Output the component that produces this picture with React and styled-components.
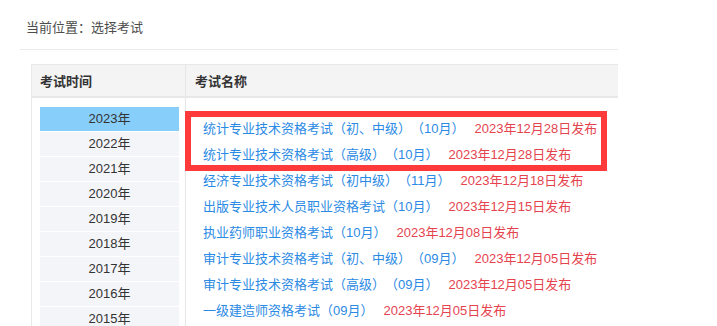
import React from 'react';
import styled, { createGlobalStyle } from 'styled-components';

const GlobalStyle = createGlobalStyle`
  html, body {
    margin: 0;
    padding: 0;
    background: #fff;
  }
  body {
    font-family: "Liberation Sans", "Noto Sans CJK SC", sans-serif;
    font-size: 13px;
    color: #333;
    text-spacing-trim: space-all;
  }
`;

const Page = styled.div`
  width: 598px;
  padding-left: 20px;
`;

const Crumb = styled.div`
  height: 50px;
  box-sizing: border-box;
  padding: 19px 0 0 6px;
  line-height: 18px;
  color: #4d4d4d;
  border-bottom: 1px solid #ebebeb;
`;

const Table = styled.div`
  margin: 14px 0 0 11px;
  width: 587px;
  display: grid;
  grid-template-columns: 154px 1fr;
  grid-template-rows: 34px 1fr;
  border-left: 1px solid #e8e8e8;
  height: 262px;
  overflow: hidden;
  box-sizing: border-box;
`;

const HeadCell = styled.div`
  background: #f4f4f4;
  border-top: 1px solid #e8e8e8;
  border-bottom: 2px solid #e8e8e8;
  border-right: ${p => (p.$divider ? '1px solid #e6e6e6' : 'none')};
  display: flex;
  align-items: center;
  padding-left: ${p => p.$pad}px;
  font-weight: bold;
  color: #333;
`;

const YearCell = styled.div`
  border-right: 1px solid #e6e6e6;
  padding: 9px 6px 0 8px;
  display: flex;
  flex-direction: column;
  gap: 1px;
`;

const Year = styled.div`
  height: 24px;
  line-height: 24px;
  flex-shrink: 0;
  text-align: center;
  color: #333;
  background: ${p => (p.$active ? '#87cefa' : '#f4f5f9')};
`;

const ListCell = styled.div`
  position: relative;
  padding: 18px 0 0 17px;
`;

const Row = styled.div`
  height: 26px;
  line-height: 26px;
  white-space: nowrap;
`;

const Name = styled.span`
  color: #2b8ae4;
`;

const Date = styled.span`
  color: #e5444f;
  margin-left: 10px;
`;

const Highlight = styled.div`
  position: absolute;
  left: -1px;
  top: 13px;
  width: 422px;
  height: 60px;
  box-sizing: border-box;
  border: 6px solid #ff3a3a;
  pointer-events: none;
`;

const years = [2023, 2022, 2021, 2020, 2019, 2018, 2017, 2016, 2015, 2014];

const exams = [
  ['统计专业技术资格考试（初、中级）（10月）', '2023年12月28日发布'],
  ['统计专业技术资格考试（高级）（10月）', '2023年12月28日发布'],
  ['经济专业技术资格考试（初中级）（11月）', '2023年12月18日发布'],
  ['出版专业技术人员职业资格考试（10月）', '2023年12月15日发布'],
  ['执业药师职业资格考试（10月）', '2023年12月08日发布'],
  ['审计专业技术资格考试（初、中级）（09月）', '2023年12月05日发布'],
  ['审计专业技术资格考试（高级）（09月）', '2023年12月05日发布'],
  ['一级建造师资格考试（09月）', '2023年12月05日发布'],
];

const App = () => (
  <Page>
    <GlobalStyle />
    <Crumb>当前位置：选择考试</Crumb>
    <Table>
      <HeadCell $pad={8} $divider>考试时间</HeadCell>
      <HeadCell $pad={9}>考试名称</HeadCell>
      <YearCell>
        {years.map(y => (
          <Year key={y} $active={y === 2023}>{y}年</Year>
        ))}
      </YearCell>
      <ListCell>
        {exams.map(([name, date]) => (
          <Row key={name}>
            <Name>{name}</Name>
            <Date>{date}</Date>
          </Row>
        ))}
        <Highlight />
      </ListCell>
    </Table>
  </Page>
);

export default App;
